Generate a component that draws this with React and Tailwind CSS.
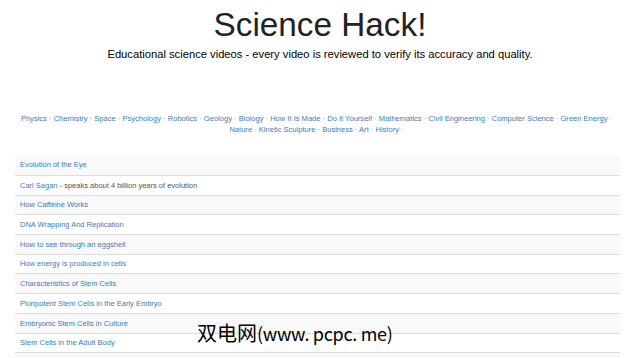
import React from "react";

const cats = [
  "Physics","Chemistry","Space","Psychology","Robotics","Geology","Biology","How It Is Made","Do It Yourself","Mathematics","Civil Engineering","Computer Science","Green Energy","Nature","Kinetic Sculpture","Business","Art","History",
];

const rows = [
  ["Evolution of the Eye"],
  ["Carl Sagan", " - speaks about 4 billion years of evolution"],
  ["How Caffeine Works"],
  ["DNA Wrapping And Replication"],
  ["How to see through an eggshell"],
  ["How energy is produced in cells"],
  ["Characteristics of Stem Cells"],
  ["Pluripotent Stem Cells in the Early Embryo"],
  ["Embryonic Stem Cells in Culture"],
  ["Stem Cells in the Adult Body"],
  [""],
];

export default function App() {
  return (
    <div className="relative w-[640px] h-[358px] overflow-hidden bg-white font-['Liberation_Sans',Arial,sans-serif]">
      <h1 className="pt-[6px] text-center text-[33.3px] leading-[38px] text-[#222]">Science Hack!</h1>
      <p className="mt-[4px] text-center text-[11.2px] leading-[13px] text-black">
        Educational science videos - every video is reviewed to verify its accuracy and quality.
      </p>
      <div className="mt-[53px] ml-[14px] w-[605px] text-center text-[7.55px] leading-[10.5px] text-[#337ab7]">
        {cats.map((c, i) => (
          <span key={i}>
            <a className="text-[#3a7cc0]">{c}</a>
            <span className="text-[#888]"> · </span>{" "}
          </span>
        ))}
      </div>
      <div className="mt-[20px] ml-[15px] w-[605px]">
        {rows.map((r, i) => (
          <div
            key={i}
            className={
              "flex items-center px-[5px] text-[7.5px] " +
              (i % 2 === 0 ? "bg-[#f9f9f9] " : "bg-white ") +
              (i === 0 ? "h-[20px]" : "h-[19.7px] border-t border-[#dddddd]")
            }
          >
            <span className="text-[#3a7cc0]">{r[0]}</span>
            {r[1] && <span className="text-[#555] whitespace-pre">{r[1]}</span>}
          </div>
        ))}
      </div>
      <div className="absolute left-[197px] top-[320px] flex items-baseline text-[20px] leading-[26px] text-black font-['Noto_Sans_CJK_SC',sans-serif]">
        <span>双电网</span>
        <span className="text-[18px] tracking-[-0.3px]">(www. pcpc. me)</span>
      </div>
    </div>
  );
}
